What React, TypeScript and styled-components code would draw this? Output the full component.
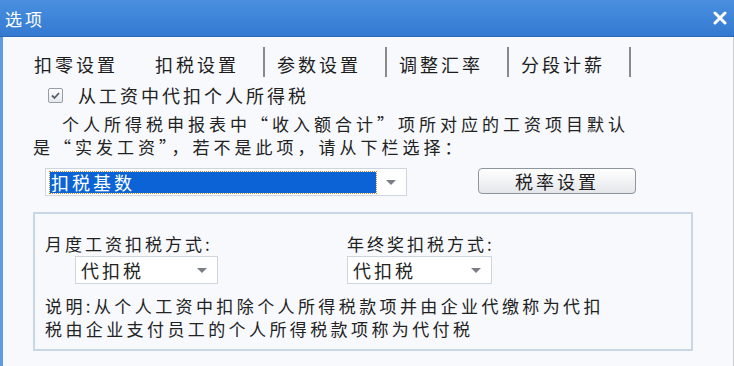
import React from 'react';
import styled, { createGlobalStyle } from 'styled-components';

const GlobalStyle = createGlobalStyle`
  html, body {
    margin: 0;
    padding: 0;
    background: #ffffff;
  }
  body {
    font-family: "Noto Sans CJK SC", "Noto Sans", sans-serif;
    color: #222;
  }
`;

// Window frame
const Window = styled.div`
  width: 734px;
  height: 366px;
  display: flex;
  flex-direction: column;
  overflow: hidden;
`;

const TitleBar = styled.div`
  height: 37px;
  flex-shrink: 0;
  display: flex;
  align-items: center;
  justify-content: space-between;
  padding: 0 6px 0 5px;
  box-sizing: border-box;
  background: linear-gradient(#4a8fdf, #3d84d8 55%, #3479d0);
  border-bottom: 1px solid #2d68b6;
  color: #fff;
  font-size: 17px;
  letter-spacing: 3px;
`;

const CloseButton = styled.div`
  width: 16px;
  height: 16px;
  display: flex;
  align-items: center;
  justify-content: center;
`;

const Body = styled.div`
  flex: 1;
  background: #f7f9fd;
  border-left: 3px solid #5d9ce2;
  border-right: 1px solid #c9cdd3;
  padding-left: 31px;
  display: flex;
  flex-direction: column;
  align-items: flex-start;
`;

// Tabs
const TabRow = styled.div`
  margin-top: 10px;
  height: 30px;
  display: flex;
  align-items: stretch;
`;

const Tab = styled.div<{ $sep?: boolean; $first?: boolean }>`
  display: flex;
  align-items: flex-end;
  padding: 0 24px 2px ${(p) => (p.$first ? 0 : 12)}px;
  font-size: 18px;
  letter-spacing: 3px;
  line-height: 22px;
  color: #1c1c1c;
  border-right: ${(p) => (p.$sep ? '2px solid #8a8a8a' : 'none')};
`;

const ActiveTab = styled(Tab)`
  padding-left: 13px;
`;

// Checkbox row
const CheckRow = styled.label`
  margin-top: 7px;
  margin-left: 14px;
  display: flex;
  align-items: center;
  gap: 15px;
  font-size: 18px;
  letter-spacing: 3px;
  line-height: 22px;
`;

const CheckBox = styled.span`
  width: 13px;
  height: 13px;
  border: 1px solid #959da6;
  border-radius: 2px;
  background: linear-gradient(#fdfdfd, #e6e9ed);
  display: flex;
  align-items: center;
  justify-content: center;
`;

const Paragraph = styled.div`
  margin-top: 6px;
  margin-left: -1px;
  font-size: 17px;
  letter-spacing: 4px;
  white-space: nowrap;
`;

const Line = styled.div<{ $indent?: number }>`
  height: 23px;
  line-height: 23px;
  padding-left: ${(p) => p.$indent ?? 0}px;
`;

// Select controls
const SelectRow = styled.div`
  margin-top: 10px;
  margin-left: 11px;
  display: flex;
  align-items: flex-start;
  gap: 71px;
`;

const Select = styled.div<{ $width: number }>`
  width: ${(p) => p.$width}px;
  height: 28px;
  box-sizing: border-box;
  background: #fff;
  border: 1px solid #cdd5de;
  display: flex;
  align-items: center;
  padding: 0 0 0 4px;
  font-size: 18px;
  letter-spacing: 3px;
`;

const SelectValue = styled.div<{ $active?: boolean }>`
  flex: 1;
  height: 21px;
  line-height: 21px;
  display: flex;
  align-items: center;
  padding-left: 1px;
  color: ${(p) => (p.$active ? '#fff' : '#222')};
  background: ${(p) => (p.$active ? '#0b63d6' : 'transparent')};
  outline: ${(p) => (p.$active ? '1px dotted #c08a3a' : 'none')};
`;

const Arrow = styled.div`
  width: 30px;
  display: flex;
  justify-content: center;
  align-items: center;
  &::after {
    content: '';
    border-left: 5px solid transparent;
    border-right: 5px solid transparent;
    border-top: 5px solid #7b7f85;
  }
`;

const Button = styled.button`
  width: 158px;
  height: 26px;
  border: 1px solid #8d959e;
  border-radius: 4px;
  background: linear-gradient(#ffffff, #f2f3f5 50%, #e4e6e9);
  font-family: inherit;
  font-size: 18px;
  letter-spacing: 3px;
  color: #1c1c1c;
  padding: 0;
  line-height: 22px;
`;

// Group box
const GroupBox = styled.div`
  margin-top: 16px;
  margin-left: -1px;
  width: 660px;
  height: 139px;
  box-sizing: border-box;
  border: 2px solid #c9d6e6;
  padding: 19px 0 0 10px;
  display: grid;
  grid-template-columns: 302px auto;
  grid-template-rows: 22px 29px auto;
  align-content: start;
`;

const FieldLabel = styled.div`
  font-size: 17px;
  letter-spacing: 3px;
  line-height: 22px;
`;

const FieldSelect = styled.div<{ $indent: number }>`
  padding-left: ${(p) => p.$indent}px;
  padding-top: 1px;
`;

const Note = styled.div`
  grid-column: 1 / span 2;
  margin-top: 10px;
  font-size: 17px;
  letter-spacing: 3.4px;
  line-height: 23px;
`;

const App: React.FC = () => {
  return (
    <>
      <GlobalStyle />
      <Window>
        <TitleBar>
          <span>选项</span>
          <CloseButton>
            <svg width="14" height="14" viewBox="0 0 14 14">
              <path d="M2 2 L12 12 M12 2 L2 12" stroke="#fff" strokeWidth="3" strokeLinecap="round" />
            </svg>
          </CloseButton>
        </TitleBar>
        <Body>
          <TabRow>
            <Tab $first>扣零设置</Tab>
            <ActiveTab $sep>扣税设置</ActiveTab>
            <Tab $sep>参数设置</Tab>
            <Tab $sep>调整汇率</Tab>
            <Tab $sep>分段计薪</Tab>
          </TabRow>

          <CheckRow>
            <CheckBox>
              <svg width="11" height="11" viewBox="0 0 11 11">
                <path d="M2 5.5 L4.5 8 L9 3" stroke="#5a5f66" strokeWidth="1.8" fill="none" />
              </svg>
            </CheckBox>
            从工资中代扣个人所得税
          </CheckRow>

          <Paragraph>
            <Line $indent={29}>个人所得税申报表中“收入额合计”项所对应的工资项目默认</Line>
            <Line>是“实发工资”，若不是此项，请从下栏选择：</Line>
          </Paragraph>

          <SelectRow>
            <Select $width={362}>
              <SelectValue $active>扣税基数</SelectValue>
              <Arrow />
            </Select>
            <Button>税率设置</Button>
          </SelectRow>

          <GroupBox>
            <FieldLabel>月度工资扣税方式:</FieldLabel>
            <FieldLabel>年终奖扣税方式:</FieldLabel>
            <FieldSelect $indent={30}>
              <Select $width={143}>
                <SelectValue>代扣税</SelectValue>
                <Arrow />
              </Select>
            </FieldSelect>
            <FieldSelect $indent={0}>
              <Select $width={145}>
                <SelectValue>代扣税</SelectValue>
                <Arrow />
              </Select>
            </FieldSelect>
            <Note>
              说明:从个人工资中扣除个人所得税款项并由企业代缴称为代扣
              <br />
              税由企业支付员工的个人所得税款项称为代付税
            </Note>
          </GroupBox>
        </Body>
      </Window>
    </>
  );
};

export default App;
